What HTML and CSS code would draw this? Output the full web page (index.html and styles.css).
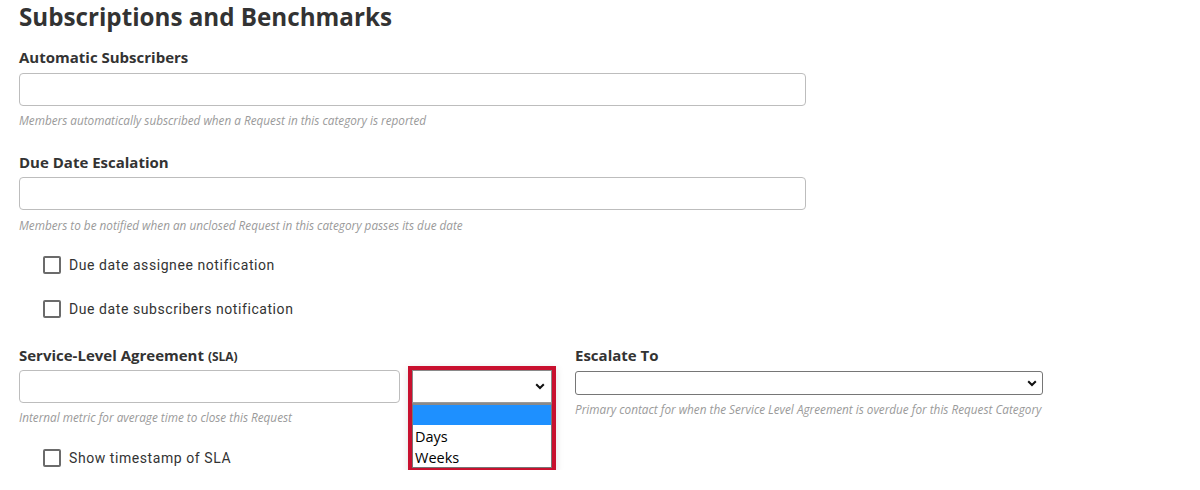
FILE: index.html
```html
<!DOCTYPE html>
<html lang="en">
<head>
<meta charset="utf-8">
<title>Subscriptions and Benchmarks</title>
<link rel="stylesheet" href="styles.css">
</head>
<body>
<div class="page">
  <h1 class="title">Subscriptions and Benchmarks</h1>

  <div class="field field-first">
    <div class="label">Automatic Subscribers</div>
    <div class="text-input"></div>
    <div class="help">Members automatically subscribed when a Request in this category is reported</div>
  </div>

  <div class="field field-second">
    <div class="label">Due Date Escalation</div>
    <div class="text-input"></div>
    <div class="help">Members to be notified when an unclosed Request in this category passes its due date</div>
  </div>

  <div class="check-row check-first">
    <span class="checkbox"></span>
    <span class="check-label">Due date assignee notification</span>
  </div>
  <div class="check-row">
    <span class="checkbox"></span>
    <span class="check-label">Due date subscribers notification</span>
  </div>

  <div class="sla-row">
    <div class="col col-sla">
      <div class="label">Service-Level Agreement <span class="small">(SLA)</span></div>
      <div class="text-input text-input-sla"></div>
      <div class="help">Internal metric for average time to close this Request</div>
      <div class="check-row check-sla">
        <span class="checkbox"></span>
        <span class="check-label">Show timestamp of SLA</span>
      </div>
    </div>

    <div class="col col-unit">
      <div class="unit-box">
        <div class="unit-select">
          <svg class="chev" width="10" height="7" viewBox="0 0 10 7"><path d="M1.2 1.2 5 5 8.8 1.2" fill="none" stroke="#111" stroke-width="2"/></svg>
        </div>
        <div class="unit-list">
          <div class="opt opt-active"></div>
          <div class="opt opt-days">Days</div>
          <div class="opt opt-weeks">Weeks</div>
        </div>
      </div>
    </div>

    <div class="col col-esc">
      <div class="label">Escalate To</div>
      <div class="esc-select">
        <svg class="chev" width="10" height="7" viewBox="0 0 10 7"><path d="M1.2 1.2 5 5 8.8 1.2" fill="none" stroke="#111" stroke-width="2"/></svg>
      </div>
      <div class="help">Primary contact for when the Service Level Agreement is overdue for this Request Category</div>
    </div>
  </div>
</div>
</body>
</html>
```

FILE: styles.css
```css
html, body {
  margin: 0;
  padding: 0;
  background: #fff;
}

.page {
  padding: 0 19px;
  font-family: "Open Sans", "Liberation Sans", sans-serif;
  color: #333;
}

.title {
  margin: 0;
  font-size: 24.2px;
  font-weight: 700;
  line-height: 34px;
  color: #333;
}

.field {
  width: 787px;
  margin-top: 24px;
}

.field-first {
  margin-top: 13px;
}

.label {
  height: 20px;
  font-size: 15px;
  font-weight: 700;
  line-height: 20px;
  color: #333;
}

.label .small {
  font-size: 12px;
  line-height: 0;
}

.text-input {
  box-sizing: border-box;
  height: 33px;
  margin-top: 5px;
  border: 1px solid #bdbdbd;
  border-radius: 4px;
  background: #fff;
}

.field-first .text-input {
  margin-top: 6px;
}

.help {
  margin-top: 6px;
  font-size: 11.75px;
  font-style: italic;
  line-height: 16px;
  color: #9a9a9a;
  white-space: nowrap;
}

.field-second .help {
  margin-top: 7px;
}

.check-row {
  display: flex;
  align-items: center;
  height: 24px;
  margin-top: 20px;
  padding-left: 24px;
}

.check-first {
  margin-top: 20px;
}

.checkbox {
  box-sizing: border-box;
  width: 18px;
  height: 18px;
  border: 2px solid #6b6b6b;
  border-radius: 2px;
  background: #fff;
  flex: none;
}

.check-label {
  margin-left: 8px;
  font-family: Roboto, "Liberation Sans", sans-serif;
  font-size: 14px;
  letter-spacing: 0.57px;
  color: #333;
}

.sla-row {
  display: flex;
  align-items: flex-start;
  margin-top: 24px;
}

.col-sla {
  width: 381px;
}

.text-input-sla {
  margin-top: 5px;
}

.check-sla {
  margin-top: 21px;
}

.col-unit {
  width: 140px;
  margin-left: 12px;
  padding-top: 25px;
}

.unit-box {
  box-shadow: 0 0 0 4px #c8102e, 0 2px 8px 4px rgba(0, 0, 0, 0.12);
  background: #fff;
}

.unit-select {
  box-sizing: border-box;
  height: 33px;
  border: 1px solid #8a8a8a;
  border-bottom: 1px solid #9a9a9a;
  display: flex;
  align-items: center;
  justify-content: flex-end;
  padding-right: 6px;
  background: #fff;
}

.unit-list {
  box-sizing: border-box;
  border: 1px solid #767676;
  border-top: 2px solid #8a8a8a;
  background: #fff;
}

.opt {
  height: 21px;
  line-height: 23px;
  padding-left: 2px;
  font-family: "Open Sans", "Liberation Sans", sans-serif;
  font-size: 14.5px;
  color: #000;
}

.opt-active {
  height: 20px;
  background: #1e90ff;
}

.col-esc {
  width: 468px;
  margin-left: 23px;
}

.esc-select {
  box-sizing: border-box;
  height: 24px;
  margin-top: 6px;
  border: 1px solid #767676;
  border-radius: 3px;
  background: #fff;
  display: flex;
  align-items: center;
  justify-content: flex-end;
  padding-right: 5px;
}

.col-esc .help {
  margin-top: 6px;
}

.chev {
  display: block;
}
```
